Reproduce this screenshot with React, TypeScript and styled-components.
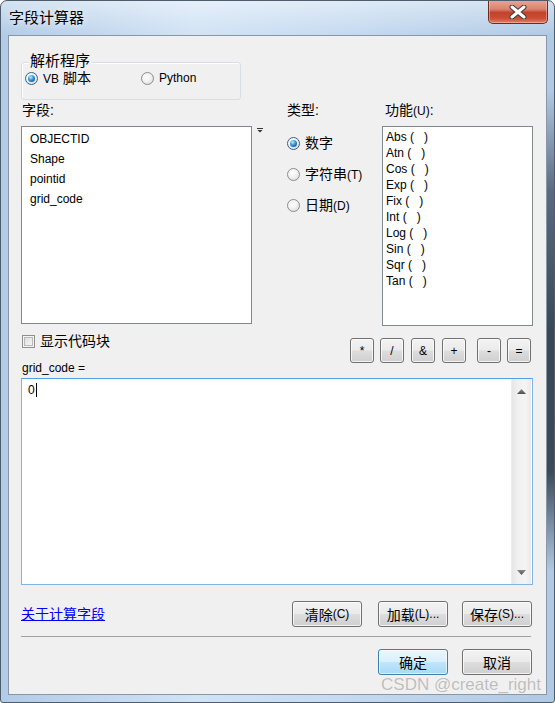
import React from "react";
import styled, { createGlobalStyle, css } from "styled-components";

const GlobalStyle = createGlobalStyle`
  html, body { margin: 0; padding: 0; background: #fff; }
  body { font-family: "Liberation Sans", "Noto Sans CJK SC", sans-serif; color: #000; }
`

const Window = styled.div`
  position: relative;
  width: 555px;
  height: 703px;
  box-sizing: border-box;
  display: flex;
  flex-direction: column;
  border: 1px solid #4e5d6e;
  border-radius: 7px 7px 3px 3px;
  overflow: hidden;
  background:
    linear-gradient(to bottom, transparent 90px, #5b6b7c 190px, #3b4755 330px, #3d4956 470px, transparent 570px) right top / 8px 100% no-repeat,
    linear-gradient(to bottom, rgba(255,255,255,0.45), rgba(255,255,255,0) 34px),
    linear-gradient(to right, #b2cbe6, #d1e3f5 35%, #c6dbf1 60%, #b0c9e4);
`

const TitleBar = styled.div`
  height: 34px;
  flex: none;
  display: flex;
  align-items: center;
  padding: 0 6px 0 8px;
`

const Title = styled.span`
  font-size: 15px;
  line-height: 18px;
  color: #000;
  text-shadow: 0 0 6px rgba(255,255,255,0.9);
`

const CloseButton = styled.div`
  margin-left: auto;
  align-self: flex-start;
  margin-top: -1px;
  width: 60px;
  height: 24px;
  box-sizing: border-box;
  border: 1px solid #6e2a20;
  border-top: none;
  border-radius: 0 0 5px 5px;
  background: linear-gradient(to bottom, #e9a797 0%, #d9826f 40%, #c2412a 55%, #cc4e35 80%, #e0826b 100%);
  box-shadow: inset 0 0 0 1px rgba(255,210,200,0.45);
  display: flex;
  align-items: center;
  justify-content: center;
`

const Body = styled.div`
  flex: 1;
  display: flex;
  padding: 0 7px 7px 7px;
`

const Client = styled.div`
  position: relative;
  flex: 1;
  display: flex;
  flex-direction: column;
  border: 1px solid #8796a8;
  background: #f0f0f0;
  padding: 0 13px 0 12px;
`

const GroupBox = styled.div`
  position: relative;
  margin-top: 26px;
  width: 220px;
  height: 38px;
  box-sizing: border-box;
  border: 1px solid #d5dfe5;
  border-radius: 3px;
  box-shadow: inset 1px 1px 0 #fff;
  padding: 8px 0 0 3px;
  display: flex;
`

const Legend = styled.span`
  position: absolute;
  top: -11px;
  left: 6px;
  padding: 0 2px;
  background: #f0f0f0;
  font-size: 15px;
  line-height: 18px;
`

const Option = styled.label<{ $width?: number }>`
  display: flex;
  align-items: center;
  gap: 5px;
  height: 14px;
  font-size: 14px;
  line-height: 14px;
  width: ${p => (p.$width ? `${p.$width}px` : "auto")};
`

const Lat = styled.span`
  font-size: 12px;
`

const Radio = styled.span<{ $checked?: boolean }>`
  flex: none;
  width: 13px;
  height: 13px;
  box-sizing: border-box;
  border-radius: 50%;
  border: 1px solid #8b8d8f;
  background: radial-gradient(circle at 40% 35%, #ffffff 0, #f2f2f2 45%, #d2d2d2 100%);
  display: flex;
  align-items: center;
  justify-content: center;
  ${p => p.$checked && css`
    border-color: #3a5f86;
    &::after {
      content: "";
      width: 7px;
      height: 7px;
      border-radius: 50%;
      background: radial-gradient(circle at 38% 32%, #c4ecff 0, #3c9de0 40%, #0f4f8c 85%);
    }
  `}
`

const Checkbox = styled.span`
  flex: none;
  width: 13px;
  height: 13px;
  box-sizing: border-box;
  border: 1px solid #8e8f8f;
  background: #f4f4f4;
  box-shadow: inset 0 0 0 1px #f4f4f4, inset 0 0 0 2px #b8b8b8;
  background-image: linear-gradient(135deg, #d8d8d8, #fbfbfb);
`

const Middle = styled.div`
  display: flex;
  margin-top: 2px;
`

const Column = styled.div<{ $width: number; $offset?: number }>`
  display: flex;
  flex-direction: column;
  width: ${p => p.$width}px;
  margin-left: ${p => p.$offset ?? 0}px;
`

const Caption = styled.div<{ $indent?: number }>`
  height: 16px;
  font-size: 14px;
  line-height: 16px;
  padding-left: ${p => p.$indent ?? 0}px;
`

const ListRow = styled.div`
  display: flex;
  align-items: flex-start;
  margin-top: 8px;
`

const ListBox = styled.div<{ $width: number; $height: number; $line: number; $indent: number }>`
  width: ${p => p.$width}px;
  height: ${p => p.$height}px;
  box-sizing: border-box;
  border: 1px solid #828790;
  background: #fff;
  padding: 2px 0 0 ${p => p.$indent}px;
  font-size: 12px;
  line-height: ${p => p.$line}px;
  white-space: pre;
`

const DropMark = styled.svg`
  margin: 2px 0 0 5px;
`

const TypeOptions = styled.div`
  display: flex;
  flex-direction: column;
  gap: 15px;
  margin-top: 17px;
  padding-left: 1px;
`

const TypeOption = styled(Option)`
  height: 16px;
`

const CodeRow = styled.div`
  display: flex;
  align-items: flex-start;
  margin-top: 8px;
`

const CodeLeft = styled.div`
  display: flex;
  flex-direction: column;
  padding-left: 1px;
`

const GridLabel = styled.div`
  margin-top: 12px;
  font-size: 12px;
  line-height: 16px;
`

const Operators = styled.div`
  display: flex;
  margin: 4px 2px 0 auto;
`

const buttonFace = css`
  box-sizing: border-box;
  border: 1px solid #707070;
  border-radius: 3px;
  background: linear-gradient(to bottom, #f2f2f2 0%, #ebebeb 48%, #dddddd 52%, #cfcfcf 100%);
  box-shadow: inset 0 0 0 1px rgba(255,255,255,0.75);
  display: flex;
  align-items: center;
  justify-content: center;
  color: #000;
`

const OpButton = styled.div<{ $gap?: number }>`
  ${buttonFace}
  width: 24px;
  height: 25px;
  margin-left: ${p => p.$gap ?? 0}px;
  font-size: 12px;
`

const Expression = styled.div`
  margin-top: 2px;
  height: 207px;
  box-sizing: border-box;
  border: 1px solid #7eb4ea;
  border-top-color: #569de5;
  background: #fff;
  display: flex;
`

const CodeText = styled.div`
  flex: 1;
  padding: 3px 6px;
  font-size: 12px;
  line-height: 16px;
  display: flex;
  align-items: flex-start;
`

const Caret = styled.span`
  width: 1px;
  height: 14px;
  margin: 1px 0 0 1px;
  background: #000;
`

const ScrollBar = styled.div`
  width: 19px;
  margin: 0 1px 0 0;
  border-left: 1px solid #ececec;
  background: linear-gradient(to right, #e6e6e6, #f0f0f0 30%, #f4f4f4 70%, #eaeaea);
  display: flex;
  flex-direction: column;
  justify-content: space-between;
  align-items: center;
  padding: 10px 0 9px;
`

const Footer = styled.div`
  display: flex;
  align-items: center;
  margin-top: 16px;
  height: 26px;
`

const HelpLink = styled.a`
  font-size: 14px;
  line-height: 16px;
  color: #0000ff;
  text-decoration: underline;
  cursor: pointer;
`

const ButtonGroup = styled.div`
  display: flex;
  margin: 0 1px 0 auto;
`

const PushButton = styled.div<{ $gap?: number; $default?: boolean }>`
  ${buttonFace}
  width: 70px;
  height: 26px;
  margin-left: ${p => p.$gap ?? 0}px;
  font-size: 14px;
  ${p => p.$default && css`
    border-color: #3c7fb1;
    background: linear-gradient(to bottom, #eaf6fd 0%, #d9f0fc 48%, #bee6fd 52%, #a7d9f5 100%);
    box-shadow: inset 0 0 0 1px rgba(255,255,255,0.6);
  `}
`

const Separator = styled.div`
  margin: 9px 2px 0 0;
  height: 1px;
  background: #a0a0a0;
`

const BottomRow = styled.div`
  display: flex;
  margin-top: 12px;
`

const Watermark = styled.span`
  position: absolute;
  right: 5px;
  bottom: 0;
  font-size: 17px;
  line-height: 19px;
  color: rgba(160,160,160,0.7);
  text-shadow: 0 0 1px #fff;
`

const fields = ["OBJECTID", "Shape", "pointid", "grid_code"]
const functions = ["Abs", "Atn", "Cos", "Exp", "Fix", "Int", "Log", "Sin", "Sqr", "Tan"]

const Arrow = ({ up }: { up?: boolean }) => (
  <svg width="9" height="5" viewBox="0 0 9 5">
    <defs>
      <linearGradient id={up ? "aup" : "adn"} x1="0" y1="0" x2="0" y2="1">
        <stop offset="0" stopColor="#8a8a8a" />
        <stop offset="1" stopColor="#4d4d4d" />
      </linearGradient>
    </defs>
    <path d={up ? "M0 5 L4.5 0 L9 5 Z" : "M0 0 L9 0 L4.5 5 Z"} fill={`url(#${up ? "aup" : "adn"})`} />
  </svg>
)

export default function App() {
  return (
    <>
      <GlobalStyle />
      <Window>
        <TitleBar>
          <Title>字段计算器</Title>
          <CloseButton>
            <svg width="18" height="14" viewBox="0 0 18 14">
              <path d="M3 2 L15 12 M15 2 L3 12" stroke="#3b3b3b" strokeWidth="5" strokeLinecap="round" />
              <path d="M3 2 L15 12 M15 2 L3 12" stroke="#fff" strokeWidth="3" strokeLinecap="round" />
            </svg>
          </CloseButton>
        </TitleBar>
        <Body>
          <Client>
            <GroupBox>
              <Legend>解析程序</Legend>
              <Option $width={116}><Radio $checked /><span><Lat>VB</Lat> 脚本</span></Option>
              <Option><Radio /><Lat>Python</Lat></Option>
            </GroupBox>

            <Middle>
              <Column $width={242}>
                <Caption $indent={1}>字段:</Caption>
                <ListRow>
                  <ListBox $width={232} $height={198} $line={20} $indent={8}>
                    {fields.map(f => <div key={f}>{f}</div>)}
                  </ListBox>
                  <DropMark width="6" height="5" viewBox="0 0 6 5">
                    <rect x="0" y="0" width="6" height="1" fill="#333" />
                    <path d="M0.5 2 L5.5 2 L3 4.5 Z" fill="#333" />
                  </DropMark>
                </ListRow>
              </Column>

              <Column $width={96} $offset={23}>
                <Caption $indent={1}>类型:</Caption>
                <TypeOptions>
                  <TypeOption><Radio $checked />数字</TypeOption>
                  <TypeOption><Radio /><span>字符串<Lat>(T)</Lat></span></TypeOption>
                  <TypeOption><Radio /><span>日期<Lat>(D)</Lat></span></TypeOption>
                </TypeOptions>
              </Column>

              <Column $width={151}>
                <Caption $indent={3}>功能<Lat>(U)</Lat>:</Caption>
                <ListRow>
                  <ListBox $width={151} $height={200} $line={16} $indent={3}>
                    {functions.map(f => <div key={f}>{`${f} (   )`}</div>)}
                  </ListBox>
                </ListRow>
              </Column>
            </Middle>

            <CodeRow>
              <CodeLeft>
                <Option><Checkbox />显示代码块</Option>
                <GridLabel>grid_code =</GridLabel>
              </CodeLeft>
              <Operators>
                <OpButton>*</OpButton>
                <OpButton $gap={6}>/</OpButton>
                <OpButton $gap={7}>&amp;</OpButton>
                <OpButton $gap={7}>+</OpButton>
                <OpButton $gap={11}>-</OpButton>
                <OpButton $gap={6}>=</OpButton>
              </Operators>
            </CodeRow>

            <Expression>
              <CodeText>0<Caret /></CodeText>
              <ScrollBar>
                <Arrow up />
                <Arrow />
              </ScrollBar>
            </Expression>

            <Footer>
              <HelpLink>关于计算字段</HelpLink>
              <ButtonGroup>
                <PushButton>清除<Lat>(C)</Lat></PushButton>
                <PushButton $gap={16}>加载<Lat>(L)...</Lat></PushButton>
                <PushButton $gap={14}>保存<Lat>(S)...</Lat></PushButton>
              </ButtonGroup>
            </Footer>

            <Separator />

            <BottomRow>
              <ButtonGroup>
                <PushButton $default>确定</PushButton>
                <PushButton $gap={14}>取消</PushButton>
              </ButtonGroup>
            </BottomRow>

            <Watermark>CSDN @create_right</Watermark>
          </Client>
        </Body>
      </Window>
    </>
  )
}
